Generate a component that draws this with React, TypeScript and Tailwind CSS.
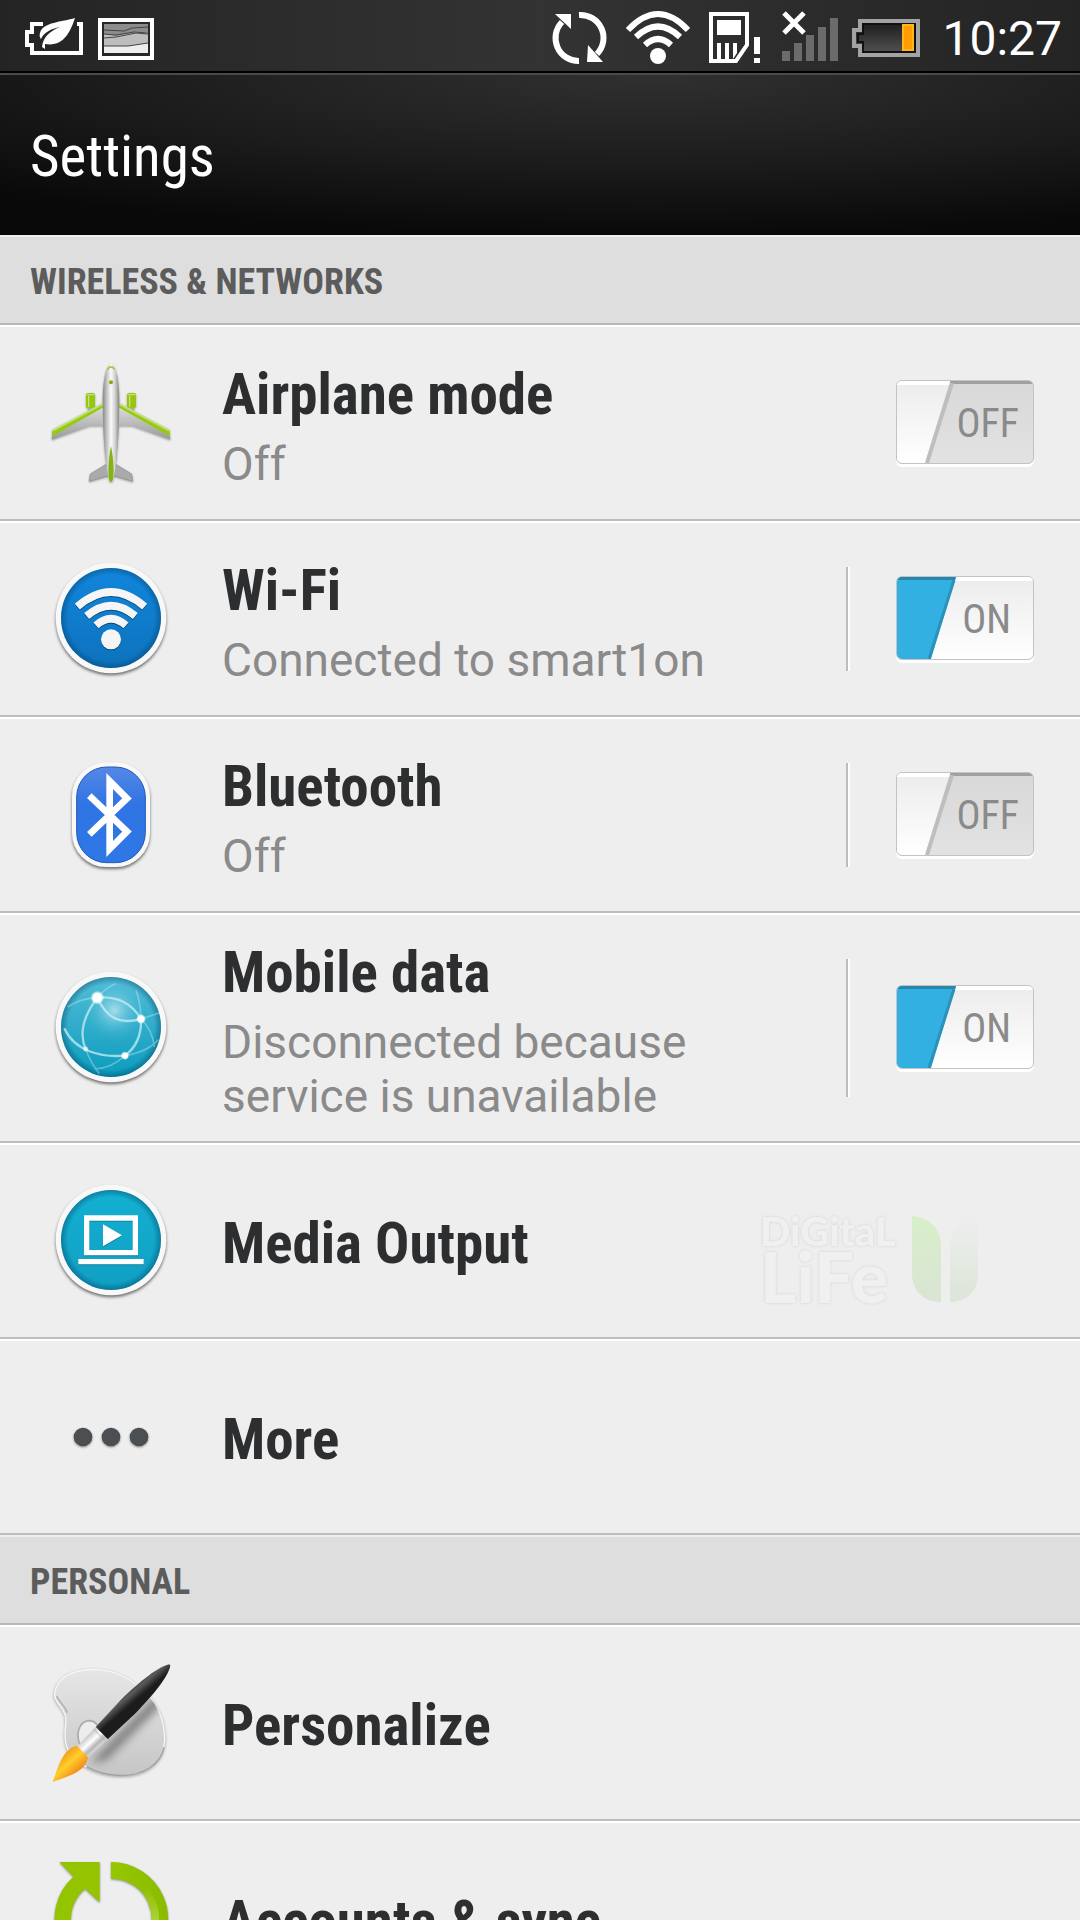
import React, { useState } from 'react';

interface SettingItem {
  id: string;
  title: string;
  summary?: string;
  icon: React.ReactNode;
  toggle?: boolean;
  divider?: boolean;
  extra?: React.ReactNode;
}

const iconClass = 'block h-[150px] w-40 shrink-0 overflow-visible';

/* ---------- Status bar icons ---------- */

const PowerSaverIcon = () => (
  <svg className="h-[72px] w-[60px] overflow-visible" viewBox="24 0 60 72" fill="none">
    <path d="M43 24H32v8h-5v13h5v8h49V24h-4" stroke="#fff" strokeWidth="4" />
    <path
      d="M75 18C62 22 43 22 40 33c-1 3 0 5 1 6 3-7 10-10 19-12-10 4-17 10-18 20l3 2v-5c18 3 25-11 30-26z"
      fill="#fff"
    />
  </svg>
);

const PictureIcon = () => (
  <svg className="h-[72px] w-14" viewBox="98 0 56 72" fill="none">
    <path d="M100 20h52v38h-52z" stroke="#fff" strokeWidth="4" />
    <path d="M104 24h44v29h-44z" fill="#8c8c8c" />
    <path d="M104 34l12 2 20-4 12 0v21h-44z" fill="#bdbdbd" />
    <path d="M104 46h24l20-3v10h-44z" fill="#eee" />
    <path
      d="M104 30l20 1 8-3 16-1M104 34l12 1 18-3 14 1M104 38l12-1 20-4 12 1M104 46h24l20-3"
      stroke="#444"
      strokeWidth="1"
    />
  </svg>
);

const SyncStatusIcon = () => (
  <svg className="h-[72px] w-[57px]" viewBox="551 0 57 72" fill="none">
    <path d="M579 15A23 23 0 0 1 597 54" stroke="#fff" strokeWidth="6" />
    <path d="M579 61A23 23 0 0 1 562 22" stroke="#fff" strokeWidth="6" />
    <path d="M555 14h16v15zM587 62h16l-15-17z" fill="#fff" />
  </svg>
);

const WifiStatusIcon = () => (
  <svg className="h-[72px] w-[68px]" viewBox="624 0 68 72" fill="none" stroke="#fff" strokeWidth="6">
    <path d="M628 30Q658 -2 688 30" />
    <path d="M636 37Q658 16 680 37" />
    <path d="M645 45Q658 33 671 45" />
    <circle cx="658" cy="56" r="8" fill="#fff" stroke="none" />
  </svg>
);

const SimAlertIcon = () => (
  <svg className="h-[72px] w-[54px]" viewBox="708 0 54 72" fill="none">
    <path d="M711 14h36v31l-11 16h-25z" stroke="#fff" strokeWidth="4" />
    <path
      d="M717 20h24v15h-24zM717 43h4v16h-4zM725 43h4v16h-4zM733 43h4v10l-4 6zM754 37h6v17h-6zM754 58h6v5h-6z"
      fill="#fff"
    />
  </svg>
);

const NoSignalIcon = () => (
  <svg className="h-[72px] w-[58px] overflow-visible" viewBox="778 0 58 72">
    <path d="M782 51h8v10h-8zM794 43h8v18h-8zM806 35h8v26h-8zM818 27h8v34h-8zM830 18h8v43h-8z" fill="#6b6b6b" />
    <path d="M784 13l20 20M804 13l-20 20" stroke="#fff" strokeWidth="5" />
  </svg>
);

const BatteryIcon = () => (
  <svg className="h-[72px] w-[72px]" viewBox="852 0 72 72">
    <defs>
      <linearGradient id="battery-cell" x2="0" y2="1">
        <stop stopColor="#1a1a1a" />
        <stop offset="1" stopColor="#555" />
      </linearGradient>
    </defs>
    <path d="M860 21h58v34h-58v-9h-6V30h6z" fill="url(#battery-cell)" stroke="#a3a3a3" strokeWidth="4" />
    <path d="M863 24h52v28h-52v-10h-5v-8h5z" fill="none" stroke="#111" strokeWidth="2" />
    <path d="M902 24h12v27h-12z" fill="#ffb61a" />
    <path d="M904 26h8v23h-8z" fill="#ff9d00" />
  </svg>
);

/* ---------- List icons ---------- */

const AirplaneIcon = () => (
  <svg className={`${iconClass} drop-shadow-[0_1px_1px_#0005]`} viewBox="0 -3 480 450">
    <defs>
      <linearGradient id="plane-body">
        <stop stopColor="#888" />
        <stop offset=".25" stopColor="#c4c4c4" />
        <stop offset=".5" stopColor="#fafafa" />
        <stop offset=".75" stopColor="#d0d0d0" />
        <stop offset="1" stopColor="#858585" />
      </linearGradient>
      <linearGradient id="plane-wing" x2="0" y2="1">
        <stop stopColor="#e4e4e4" />
        <stop offset="1" stopColor="#999" />
      </linearGradient>
    </defs>
    <path d="M174 176h15v10h-15zM297 176h15v10h-15z" fill="#aaa" />
    <rect x="168" y="132" width="27" height="45" rx="6" fill="#97c70c" />
    <rect x="291" y="132" width="27" height="45" rx="6" fill="#97c70c" />
    <path d="M170 137h23M293 137h23M176 140v34M299 140v34" stroke="#c7df83" strokeWidth="4" />
    <path d="M222 162L68 244l-3 28 115-42h43zM264 162l154 82 3 28-115-42h-43z" fill="url(#plane-wing)" />
    <path d="M222 162L68 244l-2 18 156-88zM264 162l154 82 2 18-156-88z" fill="#95cc08" />
    <path d="M222 163L68 245M264 163l154 82" stroke="#c4dc80" strokeWidth="6" />
    <path d="M230 345l-49 30-3 22 57-17zM256 345l49 30 3 22-57-17z" fill="#aaa" stroke="#8c8c8c" strokeWidth="2" />
    <path d="M243 44c-18 8-25 60-25 116 0 90 8 200 20 236h10c12-36 20-146 20-236 0-56-7-108-25-116z" fill="url(#plane-body)" />
    <path d="M232 62q11-17 22 0" fill="none" stroke="#a1c63e" strokeWidth="5" />
    <circle cx="243" cy="100" r="6" fill="#7eae06" />
    <path d="M243 292c-7 30-12 94-3 106h6c9-12 4-76-3-106z" fill="#82b414" />
  </svg>
);

interface BadgeProps {
  id: string;
  from: string;
  to: string;
  children: React.ReactNode;
}

// Round badge, drawn around the origin
const Badge = ({ id, from, to, children }: BadgeProps) => (
  <svg className={iconClass} viewBox="-243 -222 480 450">
    <defs>
      <linearGradient id={`${id}-fill`} x2="0" y2="1">
        <stop stopColor={from} />
        <stop offset="1" stopColor={to} />
      </linearGradient>
      <radialGradient id={`${id}-edge`}>
        <stop offset=".86" stopColor="#003a5c" stopOpacity="0" />
        <stop offset="1" stopColor="#003a5c" stopOpacity=".4" />
      </radialGradient>
    </defs>
    <circle r="166" className="drop-shadow-[0_6px_5px_#0008]" fill="#f8f8f8" />
    <circle r="150" fill={`url(#${id}-fill)`} />
    <circle r="150" fill={`url(#${id}-edge)`} />
    {children}
  </svg>
);

const WifiIcon = () => (
  <Badge id="wifi" from="#1186dc" to="#0d72bd">
    <g className="drop-shadow-[0_3px_2px_#0006]" fill="none" stroke="#f5f5f5" strokeWidth="23">
      <path d="M-101-34Q0-122 101-34" />
      <path d="M-73-6Q0-68 73-6" />
      <path d="M-45 22Q0-18 45 22" />
      <circle cy="64" r="30" fill="#f5f5f5" stroke="none" />
    </g>
  </Badge>
);

const BluetoothIcon = () => (
  <svg className={iconClass} viewBox="-243 -225 480 450">
    <defs>
      <linearGradient id="bt-fill" x2="0" y2="1">
        <stop stopColor="#5588e6" />
        <stop offset=".4" stopColor="#2f74e2" />
        <stop offset="1" stopColor="#2e78e6" />
      </linearGradient>
    </defs>
    <rect x="-117" y="-158" width="234" height="314" rx="102" className="drop-shadow-[0_6px_5px_#0008]" fill="#f8f8f8" />
    <rect x="-103" y="-144" width="206" height="287" rx="90" fill="url(#bt-fill)" stroke="#2458b8" strokeWidth="3" />
    <path d="M-65-58L48 50-4 102v-204L48-50-65 58" fill="none" stroke="#fff" strokeWidth="20" />
  </svg>
);

const GlobeIcon = () => (
  <Badge id="globe" from="#54bdd7" to="#0b9bbd">
    <defs>
      <radialGradient id="globe-shine" cx=".5" cy=".5" r=".5">
        <stop stopColor="#c3e8f2" stopOpacity=".8" />
        <stop offset="1" stopColor="#25afd0" stopOpacity="0" />
      </radialGradient>
      <radialGradient id="globe-node">
        <stop offset=".6" stopColor="#fff" />
        <stop offset="1" stopColor="#fff" stopOpacity="0" />
      </radialGradient>
    </defs>
    <circle cx="10" cy="-50" r="98" fill="url(#globe-shine)" />
    <g fill="none" stroke="#c6edf5" strokeWidth="7" strokeOpacity=".75">
      <path d="M-41-88C-92-20-92 30-76 66" />
      <path d="M-41-88C-10-22 30-8 90-24" />
      <path d="M-41-88C20-95 65-68 90-24 92 30 70 65 42 86" />
      <path d="M-140 4C-110 72-30 92 42 86" />
    </g>
    <g fill="none" stroke="#c6edf5" strokeWidth="5" strokeOpacity=".4">
      <path d="M-41-88Q-95-85-130-60M-41-88Q-15-120 15-130M90-24Q90-70 75-110M90-24L144-42" />
      <path d="M90-24Q125 10 130 60M42 86Q110 75 142 38M42 86Q0 125-50 126M-76 66Q-60 110-35 140" />
    </g>
    <circle cx="-41" cy="-88" r="21" fill="url(#globe-node)" />
    <circle cx="90" cy="-24" r="15" fill="url(#globe-node)" />
    <circle cx="42" cy="86" r="13" fill="url(#globe-node)" />
    <circle cx="-76" cy="66" r="9" fill="url(#globe-node)" fillOpacity=".7" />
  </Badge>
);

const MediaIcon = () => (
  <Badge id="media" from="#14b0d2" to="#109fc2">
    <g className="drop-shadow-[0_2px_1px_#0005]">
      <path d="M-73-66H73V38H-73z" fill="none" stroke="#fff" strokeWidth="16" />
      <path d="M-98 57H98v16H-98zM-24-47v66L33-14z" fill="#fff" />
    </g>
  </Badge>
);

const MoreIcon = () => (
  <svg className={`${iconClass} drop-shadow-[0_1px_1px_#0006]`} viewBox="-243 -225 480 450" fill="#4b4f51">
    <circle cx="-84" r="28" />
    <circle r="28" />
    <circle cx="84" r="28" />
  </svg>
);

const PaletteIcon = () => (
  <svg className={iconClass} viewBox="0 24 480 450">
    <defs>
      <linearGradient id="palette-board" x2="0" y2="1">
        <stop stopColor="#e6e6e6" />
        <stop offset="1" stopColor="#c6c6c6" />
      </linearGradient>
      <linearGradient id="brush-handle" gradientUnits="userSpaceOnUse" x1="260" y1="170" x2="290" y2="205">
        <stop stopColor="#222" />
        <stop offset=".45" stopColor="#5c5c5c" />
        <stop offset="1" stopColor="#1c1c1c" />
      </linearGradient>
      <linearGradient id="brush-ferrule" gradientUnits="userSpaceOnUse" x1="170" y1="290" x2="205" y2="328">
        <stop stopColor="#ccc" />
        <stop offset=".4" stopColor="#fff" />
        <stop offset=".7" stopColor="#b5b5b5" />
        <stop offset="1" stopColor="#e5e5e5" />
      </linearGradient>
      <linearGradient id="brush-tip" gradientUnits="userSpaceOnUse" x1="100" y1="340" x2="145" y2="390">
        <stop stopColor="#f39a1d" />
        <stop offset=".5" stopColor="#ffcf2a" />
        <stop offset="1" stopColor="#f2921b" />
      </linearGradient>
      <clipPath id="palette-clip">
        <path d="M76 150C90 100 150 86 205 89c60 4 110 36 145 73 36 36 54 80 54 138-2 66-54 106-130 106-70 0-120-26-154-66-18-26-16-56-13-88 8-50-44-60-31-102z" />
      </clipPath>
      <filter id="brush-blur" x="-50%" y="-50%" width="200%" height="200%">
        <feGaussianBlur stdDeviation="13" />
      </filter>
    </defs>
    <path
      d="M76 150C90 100 150 86 205 89c60 4 110 36 145 73 36 36 54 80 54 138-2 66-54 106-130 106-70 0-120-26-154-66-18-26-16-56-13-88 8-50-44-60-31-102z"
      className="drop-shadow-[0_3px_4px_#0005]"
      fill="url(#palette-board)"
      stroke="#f7f7f7"
      strokeWidth="4"
    />
    <path d="M402 322c-12 52-60 84-128 84-40 0-75-9-104-26" fill="none" stroke="#a3a3a3" strokeWidth="5" />
    <path d="M80 168c6 18 24 26 32 50" fill="none" stroke="#aaa" strokeWidth="4" />
    <g clipPath="url(#palette-clip)">
      <path d="M180 370L380 160l20 30-170 170z" fill="#555" fillOpacity=".65" filter="url(#brush-blur)" />
    </g>
    <path d="M148 310c-12-40 6-66 28-68 22 0 34 20 36 40l-40 40z" fill="#ededed" stroke="#aaa" strokeWidth="5" />
    <path d="M418 73c-28 4-90 52-145 106l-76 82 36 37 82-77c56-58 100-112 106-144z" fill="url(#brush-handle)" />
    <path d="M197 261l36 37-62 56-30-35z" fill="url(#brush-ferrule)" />
    <path d="M191 267l36 37" stroke="#b5b5b5" strokeWidth="3" />
    <path d="M141 317c-40 8-54 54-73 109 46-18 98-28 106-74z" fill="url(#brush-tip)" />
  </svg>
);

const AccountsIcon = () => (
  <svg className={`${iconClass} drop-shadow-[0_1px_1px_#0006]`} viewBox="0 612 480 450">
    <defs>
      <linearGradient id="accounts-arc">
        <stop stopColor="#95c700" />
        <stop offset="1" stopColor="#8abb00" />
      </linearGradient>
      <linearGradient id="accounts-glow" gradientUnits="userSpaceOnUse" x1="0" y1="740" x2="0" y2="840">
        <stop stopColor="#bfe15a" stopOpacity="0" />
        <stop offset="1" stopColor="#bfe15a" stopOpacity=".6" />
      </linearGradient>
    </defs>
    <path d="M243 666a171 171 0 0 1 125 288l-35-35a121 121 0 0 0-90-203z" fill="url(#accounts-arc)" />
    <path d="M88 666h121v121l-44-41c-26 22-42 55-42 91 0 64 50 118 120 121v50A171 171 0 0 1 130 710z" fill="#94c400" />
    <path d="M376 845a132 132 0 0 0-34-96" fill="none" stroke="url(#accounts-glow)" strokeWidth="22" />
  </svg>
);

const DigitalLifeMark = () => (
  <div className="flex items-center gap-3 text-[#f1f1f1] opacity-90">
    <div className="w-[140px] font-['Lato',sans-serif] font-black [text-shadow:0_0_3px_#ccc]">
      <div className="text-[40px] leading-[34px]">DiGitaL</div>
      <div className="text-[70px] leading-[56px]">LiFe</div>
    </div>
    <svg className="h-[86px] w-[68px]" viewBox="0 0 68 86">
      <defs>
        <linearGradient id="leaf-left" x2="0" y2="1">
          <stop stopColor="#d5efc5" />
          <stop offset="1" stopColor="#d8e4d2" />
        </linearGradient>
        <linearGradient id="leaf-right" x2="0" y2="1">
          <stop stopColor="#eee" />
          <stop offset="1" stopColor="#dae5d6" />
        </linearGradient>
      </defs>
      <path d="M0 0c17 1 29 13 29 29v57C13 86 0 76 0 58z" fill="url(#leaf-left)" />
      <path d="M66 0C50 2 38 14 38 29v57c16 0 28-10 28-28z" fill="url(#leaf-right)" />
    </svg>
  </div>
);

/* ---------- Toggle ---------- */

interface ToggleProps {
  label: string;
  checked: boolean;
  onChange: (checked: boolean) => void;
}

const Toggle = ({ label, checked, onChange }: ToggleProps) => (
  <label
    className={`relative mb-0.5 flex h-[84px] w-[138px] shrink-0 cursor-pointer items-center justify-end overflow-hidden rounded-md border border-[#c3c3c3] pt-1 text-[40px] leading-none text-[#8a8a8a] shadow-[0_3px_0_#fff] ${
      checked ? 'bg-linear-to-b from-[#ececec] to-white pr-[22px]' : 'bg-linear-to-b from-[#d8d8d8] to-[#e2e2e2] pr-3.5'
    }`}
  >
    <input
      type="checkbox"
      role="switch"
      aria-label={label}
      checked={checked}
      onChange={(e) => onChange(e.target.checked)}
      className="absolute inset-0 z-10 h-full w-full cursor-pointer opacity-0"
    />
    {checked ? (
      <svg className="absolute inset-0 h-full w-full" viewBox="0 0 136 82">
        <path d="M58 0h78v4H57z" fill="#fff" />
        <path d="M0 0h59L34 82H0z" fill="#32b0e1" />
        <path d="M0 0h59l-1 3H0z" fill="#2786ab" />
        <path d="M57 3l-25 79" stroke="#2c92ba" strokeWidth="3" />
      </svg>
    ) : (
      <svg className="absolute inset-0 h-full w-full" viewBox="0 0 136 82">
        <defs>
          <linearGradient id="knob" x2="0" y2="1">
            <stop stopColor="#ececec" />
            <stop offset="1" stopColor="#fff" />
          </linearGradient>
        </defs>
        <path d="M53 0h83v3H53z" fill="#a0a0a0" />
        <path d="M0 0h53L28 82H0z" fill="url(#knob)" />
        <path d="M0 0h53l-1 4H0z" fill="#fff" />
        <path d="M55 2L30 82" stroke="#bebebe" strokeWidth="4" />
      </svg>
    )}
    <span className="relative">{checked ? 'ON' : 'OFF'}</span>
  </label>
);

/* ---------- List ---------- */

const wireless: SettingItem[] = [
  { id: 'airplane', title: 'Airplane mode', summary: 'Off', icon: <AirplaneIcon />, toggle: true },
  { id: 'wifi', title: 'Wi-Fi', summary: 'Connected to smart1on', icon: <WifiIcon />, toggle: true, divider: true },
  { id: 'bluetooth', title: 'Bluetooth', summary: 'Off', icon: <BluetoothIcon />, toggle: true, divider: true },
  {
    id: 'mobile',
    title: 'Mobile data',
    summary: 'Disconnected because service is unavailable',
    icon: <GlobeIcon />,
    toggle: true,
    divider: true,
  },
  { id: 'media', title: 'Media Output', icon: <MediaIcon />, extra: <DigitalLifeMark /> },
  { id: 'more', title: 'More', icon: <MoreIcon /> },
];

const personal: SettingItem[] = [
  { id: 'personalize', title: 'Personalize', icon: <PaletteIcon /> },
  { id: 'accounts', title: 'Accounts & sync', icon: <AccountsIcon /> },
];

const SectionHeader = ({ children }: { children: React.ReactNode }) => (
  <h2 className="flex h-[90px] items-center border-t-2 border-b-2 border-t-[#eee] border-b-[#b8b8b8] bg-[#dedede] px-[30px] pt-1 text-[36px] font-bold text-[#5c5c5c]">
    {children}
  </h2>
);

const App: React.FC = () => {
  const [enabled, setEnabled] = useState<Record<string, boolean>>({ wifi: true, mobile: true });

  const renderItem = (item: SettingItem) => (
    <li
      key={item.id}
      className="flex min-h-[196px] items-center border-t-2 border-b-2 border-t-white border-b-[#bdbdbd] bg-[#eee] py-[18px] pr-[46px] pl-[30px]"
    >
      {item.icon}
      <div className="ml-8 flex-1 pt-1.5 pr-[30px]">
        <h3 className="text-[57px] leading-[68px] font-bold text-[#2d2e30]">{item.title}</h3>
        {item.summary && (
          <p className="mt-2 font-['Roboto',sans-serif] text-[46px] leading-[54px] text-[#8a8a8a]">{item.summary}</p>
        )}
      </div>
      {item.divider && <div className="my-[26px] mr-[46px] w-1 self-stretch border-r-2 border-l-2 border-r-white border-l-[#bdbdbd]" />}
      {item.toggle && (
        <Toggle
          label={item.title}
          checked={!!enabled[item.id]}
          onChange={(checked) => setEnabled((prev) => ({ ...prev, [item.id]: checked }))}
        />
      )}
      {item.extra && <div className="mr-[54px] pt-9">{item.extra}</div>}
    </li>
  );

  return (
    <div className="flex h-screen flex-col overflow-hidden bg-[#eee] font-['Roboto_Condensed','Roboto',sans-serif]">
      <div className="flex h-[73px] shrink-0 items-center justify-between border-b-2 border-black bg-linear-to-r from-[#242424] via-[#333] to-[#242424] pr-[18px] pl-6">
        <div className="flex gap-3.5">
          <PowerSaverIcon />
          <PictureIcon />
        </div>
        <div className="flex items-center gap-4">
          <SyncStatusIcon />
          <WifiStatusIcon />
          <SimAlertIcon />
          <NoSignalIcon />
          <BatteryIcon />
          <time className="pt-1.5 pl-0.5 font-['Roboto',sans-serif] text-[48px] leading-none text-white">10:27</time>
        </div>
      </div>

      <header className="flex h-[162px] shrink-0 items-center border-t-2 border-[#4a4a4a] bg-[radial-gradient(ellipse_90%_100%_at_60%_0%,#303030,#1c1c1c_55%,#090909_100%)] px-[30px] pt-1">
        <h1 className="text-[57px] leading-[68px] text-white">Settings</h1>
      </header>

      <main className="min-h-0 flex-1 overflow-y-auto [scrollbar-width:none]">
        <SectionHeader>WIRELESS &amp; NETWORKS</SectionHeader>
        <ul>{wireless.map(renderItem)}</ul>
        <SectionHeader>PERSONAL</SectionHeader>
        <ul>{personal.map(renderItem)}</ul>
      </main>
    </div>
  );
};

export default App;
